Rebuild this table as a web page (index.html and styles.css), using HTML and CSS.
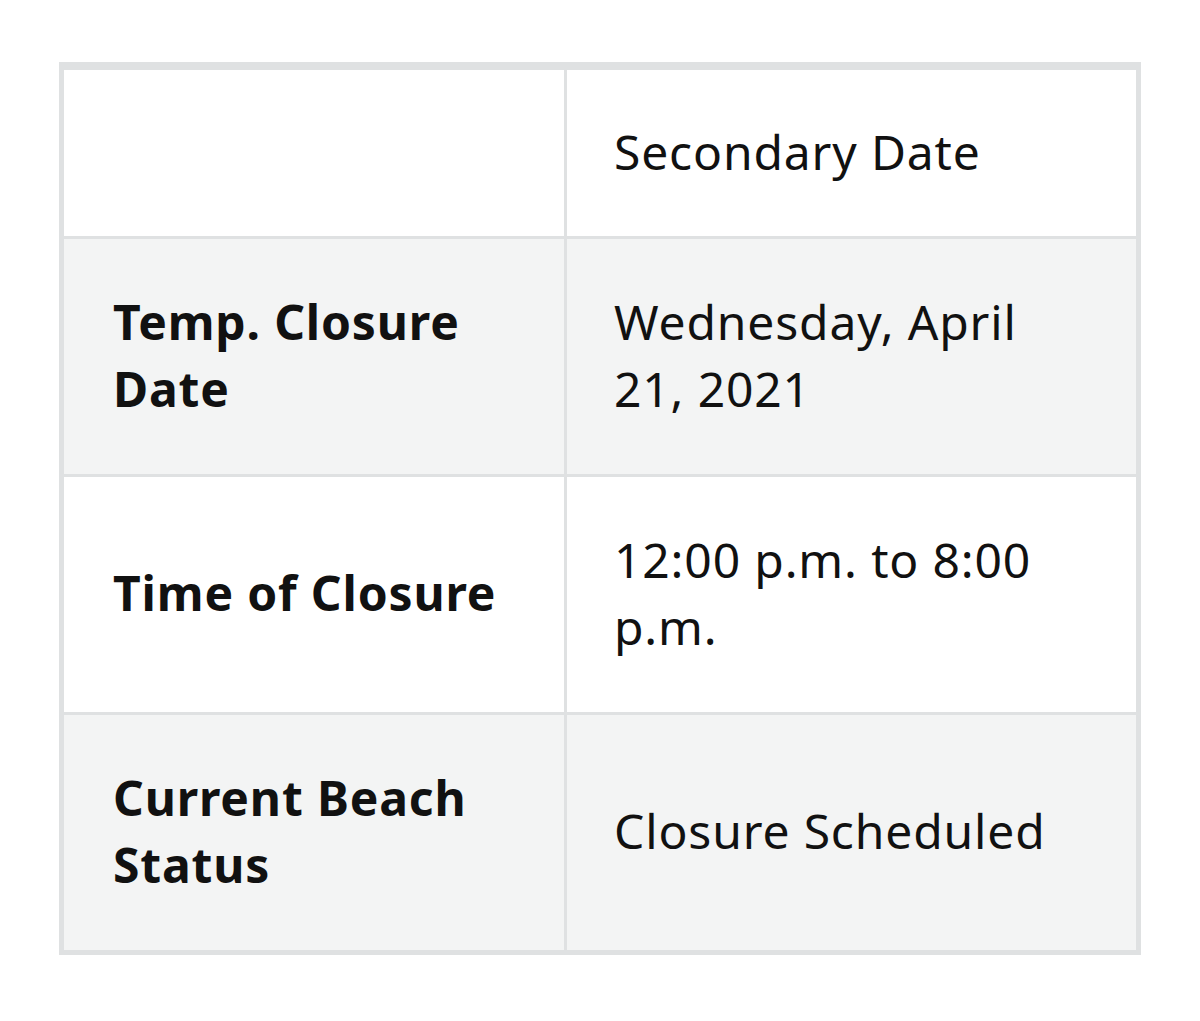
FILE: index.html
```html
<!DOCTYPE html>
<html lang="en">
<head>
<meta charset="utf-8">
<title>Beach Closure</title>
<link rel="stylesheet" href="styles.css">
</head>
<body>
<table class="closure-table">
  <thead>
    <tr>
      <th class="col-label"></th>
      <th class="col-value">Secondary Date</th>
    </tr>
  </thead>
  <tbody>
    <tr class="row-striped">
      <th class="col-label" scope="row">Temp. Closure Date</th>
      <td class="col-value">Wednesday, April 21, 2021</td>
    </tr>
    <tr>
      <th class="col-label" scope="row">Time of Closure</th>
      <td class="col-value">12:00 p.m. to 8:00 p.m.</td>
    </tr>
    <tr class="row-striped">
      <th class="col-label" scope="row">Current Beach Status</th>
      <td class="col-value">Closure Scheduled</td>
    </tr>
  </tbody>
</table>
</body>
</html>
```
FILE: styles.css
```css
html, body {
  margin: 0;
  padding: 0;
  background: #ffffff;
}

body {
  padding: 62px 0 0 59px;
  font-family: "Noto Sans", "Liberation Sans", sans-serif;
  color: #111111;
}

.closure-table {
  border-collapse: separate;
  border-spacing: 0;
  width: 1082px;
  border: 5px solid #dfe1e2;
  border-top-width: 8px;
  font-size: 48px;
  letter-spacing: 0.85px;
  line-height: 67.5px;
  table-layout: fixed;
}

.closure-table th,
.closure-table td {
  text-align: left;
  vertical-align: middle;
  padding: 48.5px 50px 51.5px 49px;
}

.closure-table thead th {
  font-weight: 400;
  padding-top: 48px;
  padding-bottom: 50.5px;
}

.closure-table tbody th,
.closure-table tbody td {
  border-top: 3px solid #dfe1e2;
}

.closure-table tbody th {
  font-weight: 700;
}

.col-label {
  width: 503px;
  box-sizing: border-box;
  border-right: 3px solid #dfe1e2;
}

.col-value {
  font-weight: 400;
  padding-left: 47px !important;
  padding-right: 60px !important;
}

.row-striped th,
.row-striped td {
  background: #f3f4f4;
}
```
